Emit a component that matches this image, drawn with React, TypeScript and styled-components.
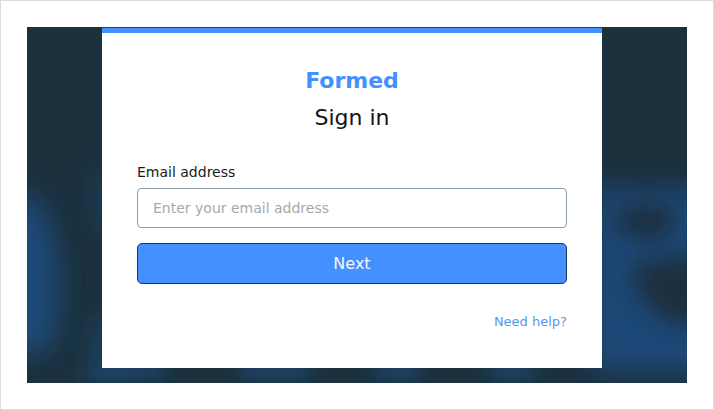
import React from "react";
import styled, { createGlobalStyle } from "styled-components";

const GlobalStyle = createGlobalStyle`
  html, body {
    margin: 0;
    padding: 0;
    background: #fff;
    font-family: "DejaVu Sans", sans-serif;
  }
`;

const Frame = styled.div`
  box-sizing: border-box;
  width: 714px;
  height: 410px;
  padding: 26px;
  border: 1px solid #dcdcdc;
  background: #fff;
`;

const Stage = styled.main`
  position: relative;
  width: 660px;
  height: 356px;
  overflow: hidden;
  background: #1b313e;
`;

const Backdrop = styled.svg`
  position: absolute;
  inset: 0;
`;

const Card = styled.section`
  position: relative;
  box-sizing: border-box;
  width: 500px;
  height: 341px;
  margin-left: 75px;
  padding: 36px 35px 0;
  background: #fff;
  border-top: 6px solid #4490fe;
  display: flex;
  flex-direction: column;
`;

const TopLine = styled.div`
  position: absolute;
  top: -6px;
  left: 0;
  right: 0;
  height: 1px;
  background: #1f4263;
`;

const Brand = styled.div`
  text-align: center;
  font-size: 22px;
  line-height: 24px;
  font-weight: 700;
  color: #4490fe;
`;

const Title = styled.h1`
  margin: 11px 0 0;
  text-align: center;
  font-size: 22px;
  line-height: 28px;
  font-weight: 400;
  color: #141414;
`;

const Label = styled.label`
  display: block;
  margin-top: 30px;
  font-size: 14px;
  line-height: 20px;
  color: #1a1a1a;
`;

const EmailInput = styled.input`
  box-sizing: border-box;
  display: block;
  width: 100%;
  height: 40px;
  margin-top: 6px;
  padding: 0 15px;
  border: 1px solid #8c9ba8;
  border-radius: 4px;
  background: #fff;
  font-family: inherit;
  font-size: 14px;
  outline: none;

  &::placeholder {
    color: #a8a8a8;
    opacity: 1;
  }
`;

const NextButton = styled.button`
  box-sizing: border-box;
  display: block;
  width: 100%;
  height: 41px;
  margin-top: 15px;
  border: 1px solid #1b3a5a;
  border-radius: 5px;
  background: #4490fe;
  color: #f4f8ff;
  font-family: inherit;
  font-size: 16px;
`;

const Help = styled.a`
  align-self: flex-end;
  margin-top: 29px;
  font-size: 13px;
  line-height: 18px;
  color: #5797e6;
  text-decoration: none;
`;

const Blurred = () => (
  <Backdrop width="660" height="356" viewBox="0 0 660 356" aria-hidden="true">
    <defs>
      <filter id="wide" x="-60%" y="-60%" width="220%" height="220%">
        <feGaussianBlur stdDeviation="13" />
      </filter>
      <filter id="spot" x="-100%" y="-100%" width="300%" height="300%">
        <feGaussianBlur stdDeviation="12" />
      </filter>
      <filter id="fine" x="-50%" y="-100%" width="200%" height="300%">
        <feGaussianBlur stdDeviation="8" />
      </filter>
    </defs>
    <g filter="url(#wide)">
      {/* left letter */}
      <path d="M-30 170 L8 170 C34 205 40 270 22 325 L-30 325 Z" fill="#1f4a78" />
      <path d="M66 150 L95 150 L95 210 L76 205 Z" fill="#1e3f5c" />
      <path d="M70 290 L95 280 L95 360 L56 360 Z" fill="#1e3f5c" />
      {/* right letter */}
      <rect x="565" y="162" width="120" height="182" fill="#1f4a78" />
    </g>
    <g filter="url(#spot)" fill="#1a2f3c">
      <ellipse cx="619" cy="194" rx="32" ry="19" />
      <path d="M600 238 L690 224 L690 296 C664 304 628 296 612 268 Z" />
    </g>
    <g filter="url(#fine)" fill="#1f4774">
      <rect x="70" y="338" width="68" height="12" />
      <rect x="213" y="338" width="70" height="12" />
      <rect x="348" y="338" width="45" height="12" />
      <rect x="463" y="338" width="45" height="12" />
    </g>
  </Backdrop>
);

const App = () => {
  return (
    <Frame>
      <GlobalStyle />
      <Stage>
        <Blurred />
        <Card>
          <TopLine />
          <Brand>Formed</Brand>
          <Title>Sign in</Title>
          <Label htmlFor="email">Email address</Label>
          <EmailInput id="email" type="email" placeholder="Enter your email address" />
          <NextButton type="button">Next</NextButton>
          <Help href="#">Need help?</Help>
        </Card>
      </Stage>
    </Frame>
  );
};

export default App;
